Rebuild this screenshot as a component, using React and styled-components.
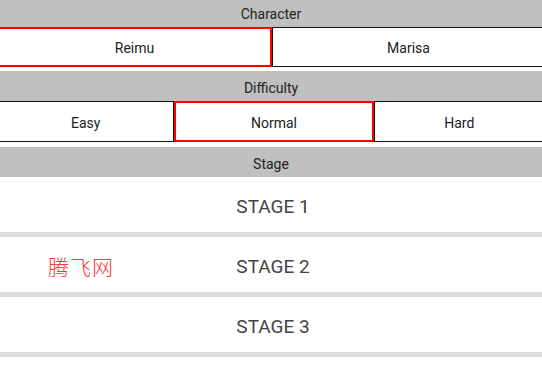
import styled, { createGlobalStyle } from "styled-components";

const Global = createGlobalStyle`
  html, body {
    margin: 0;
    padding: 0;
    background: #ffffff;
    font-family: Roboto, "Noto Sans", sans-serif;
    overflow: hidden;
  }
`;

const Page = styled.div`
  position: relative;
  width: 542px;
  height: 377px;
  overflow: hidden;
  display: flex;
  flex-direction: column;
`;

const Header = styled.div`
  height: ${(p) => p.$h}px;
  box-sizing: border-box;
  padding-top: ${(p) => p.$pad || 0}px;
  background: #c0c0c0;
  color: #222222;
  font-size: 14px;
  display: flex;
  align-items: center;
  justify-content: center;
  flex-shrink: 0;
`;

const Choices = styled.div`
  display: flex;
  width: calc(100% + 6px);
  margin: 0 0 ${(p) => p.$gap}px -3px;
  height: ${(p) => p.$h}px;
  flex-shrink: 0;
`;

const Choice = styled.button`
  flex: ${(p) => p.$grow} 1 0;
  min-width: 0;
  height: 100%;
  box-sizing: border-box;
  background: #ffffff;
  border: ${(p) => (p.$active ? "2px solid #ff0000" : "1.5px solid #111111")};
  border-radius: 0;
  margin: 0;
  padding: 2px 0 0;
  font-family: Roboto, "Noto Sans", sans-serif;
  font-size: 14px;
  color: #222222;
`;

const StageList = styled.div`
  display: flex;
  flex-direction: column;
`;

const Stage = styled.div`
  height: 55px;
  border-bottom: 5px solid #dddddd;
  display: flex;
  align-items: center;
  justify-content: center;
  padding-left: 4px;
  font-size: 19px;
  color: #444444;
  background: #ffffff;
  line-height: 1;
  & > span {
    margin-top: 3px;
  }
`;

const Watermark = styled.div`
  position: absolute;
  left: 48px;
  top: 251px;
  font-family: "Noto Sans CJK SC", sans-serif;
  font-weight: 300;
  font-size: 21px;
  color: #f43a3a;
  letter-spacing: 1px;
`;

const stages = ["STAGE 1", "STAGE 2", "STAGE 3"];

export default function App() {
  return (
    <Page>
      <Global />
      <Header $h={27}>Character</Header>
      <Choices $h={40} $gap={4}>
        <Choice $grow={1} $active>Reimu</Choice>
        <Choice $grow={1}>Marisa</Choice>
      </Choices>
      <Header $h={30} $pad={3}>Difficulty</Header>
      <Choices $h={41} $gap={5}>
        <Choice $grow={178}>Easy</Choice>
        <Choice $grow={198} $active>Normal</Choice>
        <Choice $grow={172}>Hard</Choice>
      </Choices>
      <Header $h={30} $pad={3}>Stage</Header>
      <StageList>
        {stages.map((s) => (
          <Stage key={s}>
            <span>{s}</span>
          </Stage>
        ))}
      </StageList>
      <Watermark>腾飞网</Watermark>
    </Page>
  );
}
